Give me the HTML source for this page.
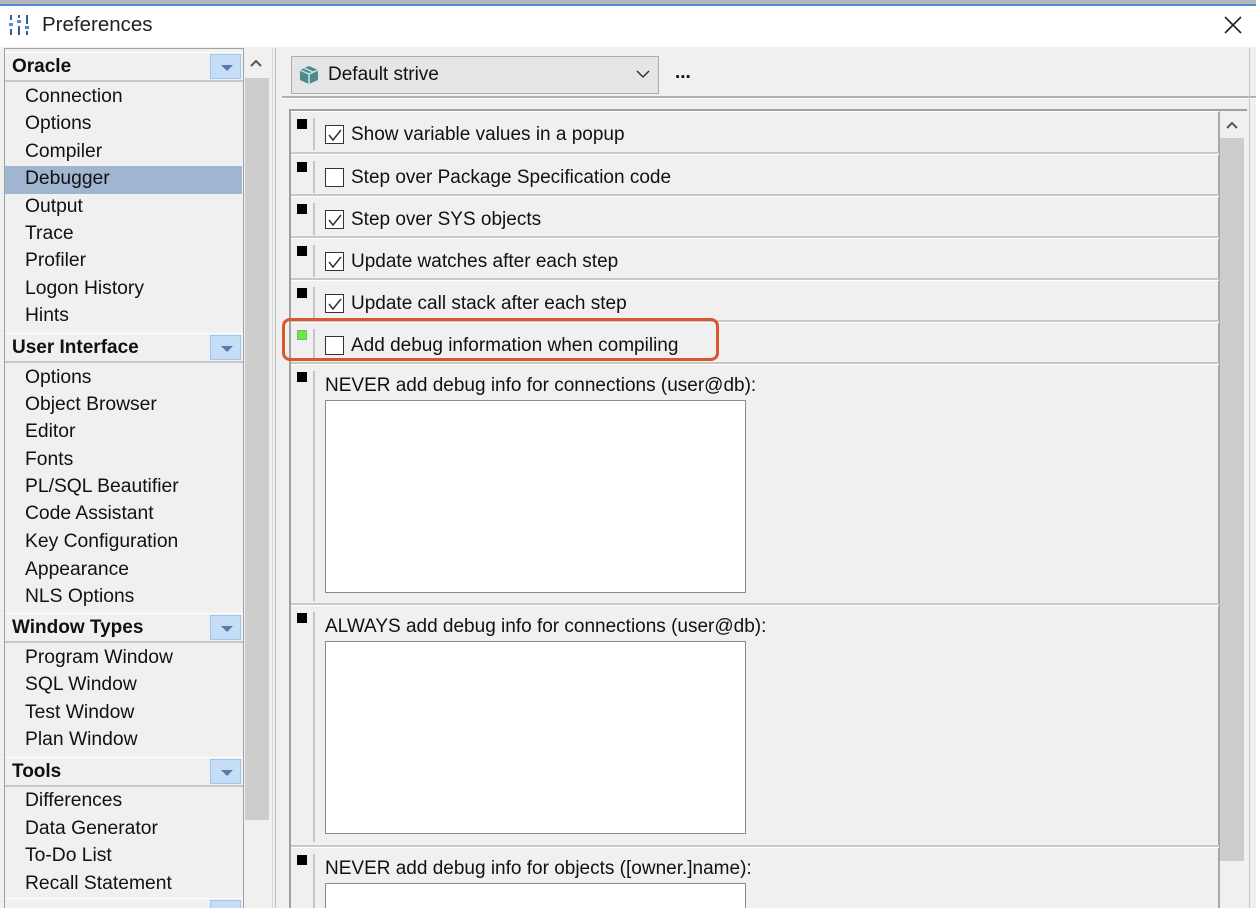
<!DOCTYPE html>
<html style="width:1256px;height:908px;overflow:hidden"><head><meta charset="utf-8"><style>
*{margin:0;padding:0;box-sizing:border-box}
body{width:1256px;height:908px;overflow:hidden;background:#f0f0f0;font-family:"Liberation Sans",sans-serif;font-size:19px;color:#111;position:relative}
.a{position:absolute}
.title{left:0;top:0;width:1256px;height:47px;background:#fff;border-top:4px solid #b8b8b8}
.title:before{content:"";position:absolute;left:0;right:0;top:0;height:2px;background:#4a8fd6}
.item{position:absolute;left:25px;white-space:nowrap;font-size:19.3px}
.hdr{position:absolute;left:5px;width:238px;height:30px;background:#f0f0f0;border-top:1px solid #fff;border-bottom:2px solid #c8c8c8;font-weight:bold;padding-left:7px;line-height:28px;font-size:19px}
.dd{position:absolute;right:2px;top:1px;width:31px;height:25px;background:#c6ddf6;border:1px solid #9ec6f0}
.dd:after{content:"";position:absolute;left:10px;top:10px;border-left:6px solid transparent;border-right:6px solid transparent;border-top:6px solid #5a7ba6}
.row{position:absolute;left:291px;width:928px;border-bottom:2px solid #c8c8c8;border-top:1px solid #fff;overflow:hidden}
.mk{position:absolute;left:6px;top:7px;width:10px;height:10px;background:#000}
.vl{position:absolute;left:22px;top:6px;width:2px;background:#c4c4c4}
.cb{position:absolute;left:34px;width:19px;height:19px;background:#fff;border:1px solid #333}
.cb svg{position:absolute;left:1px;top:1px}
.lbl{position:absolute;left:60px;white-space:nowrap}
.ta{position:absolute;left:34px;width:421px;background:#fff;border:1px solid #8a8a8a}
</style></head><body>
<div class="a title"></div>
<svg class="a" style="left:9px;top:14px" width="26" height="24"><g fill="#3a5f8a"><rect x="1" y="1" width="2" height="5"/><rect x="0" y="9" width="4" height="3" fill="#4a8fd6"/><rect x="1" y="15" width="2" height="6"/><rect x="9" y="1" width="2" height="3"/><rect x="8" y="6" width="4" height="3" fill="#4a8fd6"/><rect x="9" y="12" width="2" height="9"/><rect x="17" y="1" width="2" height="9"/><rect x="16" y="12" width="4" height="3" fill="#4a8fd6"/><rect x="17" y="17" width="2" height="4"/></g></svg>
<div class="a" style="left:42px;top:13px;font-size:20.5px;color:#222">Preferences</div>
<svg class="a" style="left:1224px;top:16px" width="18" height="18"><path d="M1 1L17 17M17 1L1 17" stroke="#222" stroke-width="1.6"/></svg>

<div class="a" style="left:4px;top:48px;width:240px;height:860px;background:#f0f0f0;border:1px solid #a0a0a0;border-bottom:none"></div>
<div class="a" style="left:244px;top:48px;width:27px;height:860px;background:#f0f0f0"></div>
<div class="a" style="left:245px;top:78px;width:24px;height:742px;background:#cdcdcd"></div>
<svg class="a" style="left:249px;top:58px" width="14" height="10"><path d="M2 8L7 3L12 8" stroke="#555" stroke-width="2" fill="none"/></svg>
<div class="a" style="left:272px;top:48px;width:1px;height:860px;background:#d8d8d8"></div>
<div class="a" style="left:275px;top:48px;width:1px;height:860px;background:#c0c0c0"></div>

<div class="hdr" style="top:52px">Oracle<div class="dd"></div></div>
<div class="a" style="left:5px;top:166px;width:237px;height:28px;background:#a0b5cf"></div>
<div class="item" style="top:86px">Connection</div>
<div class="item" style="top:113px">Options</div>
<div class="item" style="top:141px">Compiler</div>
<div class="item" style="top:168px">Debugger</div>
<div class="item" style="top:196px">Output</div>
<div class="item" style="top:223px">Trace</div>
<div class="item" style="top:250px">Profiler</div>
<div class="item" style="top:278px">Logon History</div>
<div class="item" style="top:305px">Hints</div>
<div class="hdr" style="top:333px">User Interface<div class="dd"></div></div>
<div class="item" style="top:367px">Options</div>
<div class="item" style="top:394px">Object Browser</div>
<div class="item" style="top:421px">Editor</div>
<div class="item" style="top:449px">Fonts</div>
<div class="item" style="top:476px">PL/SQL Beautifier</div>
<div class="item" style="top:503px">Code Assistant</div>
<div class="item" style="top:531px">Key Configuration</div>
<div class="item" style="top:559px">Appearance</div>
<div class="item" style="top:586px">NLS Options</div>
<div class="hdr" style="top:613px">Window Types<div class="dd"></div></div>
<div class="item" style="top:647px">Program Window</div>
<div class="item" style="top:674px">SQL Window</div>
<div class="item" style="top:702px">Test Window</div>
<div class="item" style="top:729px">Plan Window</div>
<div class="hdr" style="top:757px">Tools<div class="dd"></div></div>
<div class="item" style="top:790px">Differences</div>
<div class="item" style="top:818px">Data Generator</div>
<div class="item" style="top:845px">To-Do List</div>
<div class="item" style="top:873px">Recall Statement</div>
<div class="hdr" style="top:898px;height:10px;border-bottom:none"><div class="dd"></div></div>

<div class="a" style="left:291px;top:56px;width:368px;height:38px;background:#e5e5e5;border:1px solid #adadad"></div>
<svg class="a" style="left:298px;top:64px" width="22" height="22"><path d="M2 6L11 2L20 6L20 16L11 20L2 16Z" fill="#4f8a8b"/><path d="M2 6L11 10L20 6M11 10L11 20" stroke="#cfe3e3" stroke-width="1.5" fill="none"/><path d="M6 4L15 8" stroke="#cfe3e3" stroke-width="1.5"/></svg>
<div class="a" style="left:328px;top:64px">Default strive</div>
<svg class="a" style="left:636px;top:69px" width="14" height="10"><path d="M1 2L7 8L13 2" stroke="#333" stroke-width="1.5" fill="none"/></svg>
<div class="a" style="left:675px;top:62px;font-weight:bold">...</div>
<div class="a" style="left:282px;top:96px;width:974px;height:2px;background:#b0b0b0"></div>
<div class="a" style="left:282px;top:98px;width:974px;height:1px;background:#fff"></div>

<div class="a" style="left:289px;top:109px;width:2px;height:799px;background:#a0a0a0"></div>
<div class="a" style="left:289px;top:109px;width:958px;height:2px;background:#a0a0a0"></div>
<div class="a" style="left:1218px;top:111px;width:2px;height:797px;background:#a8a8a8"></div>
<div class="a" style="left:1220px;top:138px;width:24px;height:723px;background:#cdcdcd"></div>
<svg class="a" style="left:1225px;top:120px" width="14" height="10"><path d="M2 8L7 3L12 8" stroke="#555" stroke-width="2" fill="none"/></svg>
<div class="a" style="left:1249px;top:48px;width:1px;height:860px;background:#c8c8c8"></div>

<div class="row" style="top:111px;height:43px"><div class="mk"></div><div class="vl" style="height:32px"></div><div class="cb" style="top:13px"><svg width="16" height="16"><path d="M2 8L6 13L14 3" stroke="#333" stroke-width="1.5" fill="none"/></svg></div><div class="lbl" style="top:12px">Show variable values in a popup</div></div>
<div class="row" style="top:154px;height:42px"><div class="mk"></div><div class="vl" style="height:32px"></div><div class="cb" style="top:13px"></div><div class="lbl" style="top:12px">Step over Package Specification code</div></div>
<div class="row" style="top:196px;height:42px"><div class="mk"></div><div class="vl" style="height:32px"></div><div class="cb" style="top:13px"><svg width="16" height="16"><path d="M2 8L6 13L14 3" stroke="#333" stroke-width="1.5" fill="none"/></svg></div><div class="lbl" style="top:12px">Step over SYS objects</div></div>
<div class="row" style="top:238px;height:42px"><div class="mk"></div><div class="vl" style="height:32px"></div><div class="cb" style="top:13px"><svg width="16" height="16"><path d="M2 8L6 13L14 3" stroke="#333" stroke-width="1.5" fill="none"/></svg></div><div class="lbl" style="top:12px">Update watches after each step</div></div>
<div class="row" style="top:280px;height:42px"><div class="mk"></div><div class="vl" style="height:32px"></div><div class="cb" style="top:13px"><svg width="16" height="16"><path d="M2 8L6 13L14 3" stroke="#333" stroke-width="1.5" fill="none"/></svg></div><div class="lbl" style="top:12px">Update call stack after each step</div></div>
<div class="row" style="top:322px;height:42px"><div class="mk" style="background:#5ef03c;border:1px solid #8a8"></div><div class="vl" style="height:32px"></div><div class="cb" style="top:13px"></div><div class="lbl" style="top:12px">Add debug information when compiling</div></div>
<div class="row" style="top:364px;height:241px"><div class="mk"></div><div class="vl" style="height:230px"></div><div class="lbl" style="left:34px;top:10px">NEVER add debug info for connections (user@db):</div><div class="ta" style="top:35px;height:193px"></div></div>
<div class="row" style="top:605px;height:242px"><div class="mk"></div><div class="vl" style="height:230px"></div><div class="lbl" style="left:34px;top:10px">ALWAYS add debug info for connections (user@db):</div><div class="ta" style="top:35px;height:193px"></div></div>
<div class="row" style="top:847px;height:61px;border-bottom:none"><div class="mk"></div><div class="vl" style="height:60px"></div><div class="lbl" style="left:34px;top:10px">NEVER add debug info for objects ([owner.]name):</div><div class="ta" style="top:35px;height:40px"></div></div>

<div class="a" style="left:282px;top:318px;width:437px;height:43px;border:3px solid #d9562f;border-radius:8px"></div>
</body></html>
